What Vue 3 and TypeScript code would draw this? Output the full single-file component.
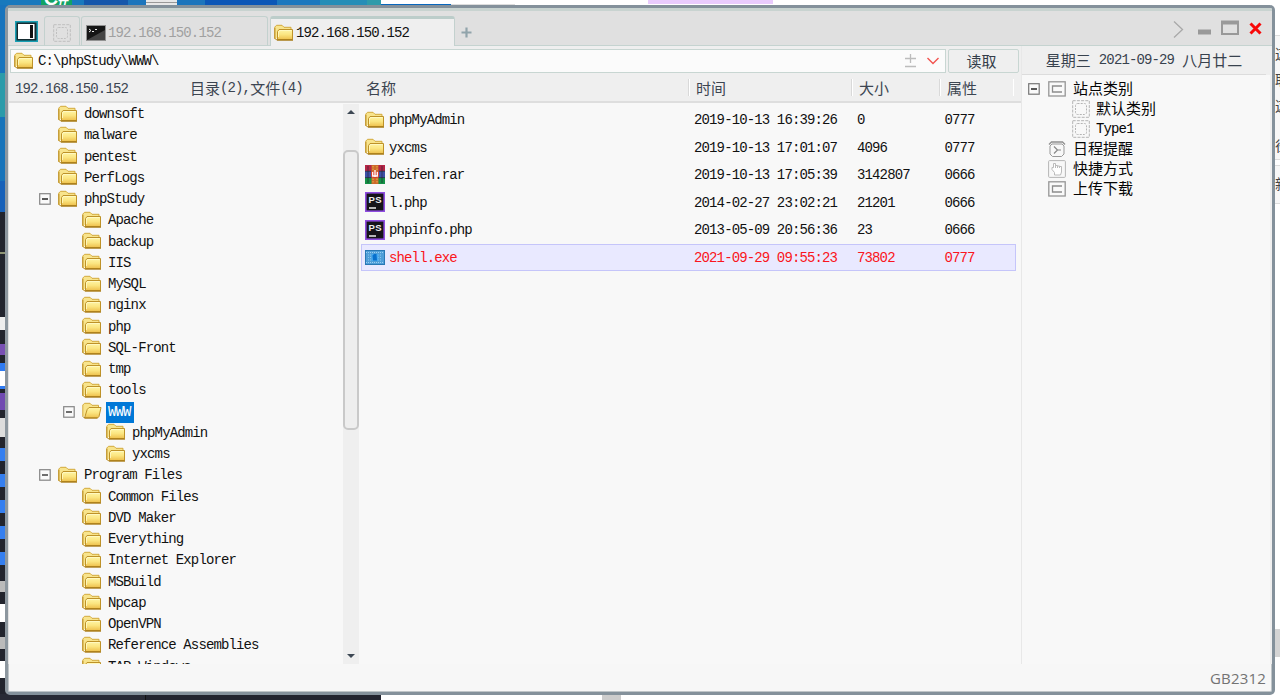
<script setup lang="ts">
interface TreeNode { label: string; level: number; open?: boolean; selected?: boolean }
interface FileRow { name: string; time: string; size: string; attr: string; kind: 'folder' | 'rar' | 'php' | 'exe'; selected?: boolean }

const tree: TreeNode[] = [
  { label: 'downsoft', level: 1 },
  { label: 'malware', level: 1 },
  { label: 'pentest', level: 1 },
  { label: 'PerfLogs', level: 1 },
  { label: 'phpStudy', level: 1, open: true },
  { label: 'Apache', level: 2 },
  { label: 'backup', level: 2 },
  { label: 'IIS', level: 2 },
  { label: 'MySQL', level: 2 },
  { label: 'nginx', level: 2 },
  { label: 'php', level: 2 },
  { label: 'SQL-Front', level: 2 },
  { label: 'tmp', level: 2 },
  { label: 'tools', level: 2 },
  { label: 'WWW', level: 2, open: true, selected: true },
  { label: 'phpMyAdmin', level: 3 },
  { label: 'yxcms', level: 3 },
  { label: 'Program Files', level: 1, open: true },
  { label: 'Common Files', level: 2 },
  { label: 'DVD Maker', level: 2 },
  { label: 'Everything', level: 2 },
  { label: 'Internet Explorer', level: 2 },
  { label: 'MSBuild', level: 2 },
  { label: 'Npcap', level: 2 },
  { label: 'OpenVPN', level: 2 },
  { label: 'Reference Assemblies', level: 2 },
  { label: 'TAP-Windows', level: 2 },
]

const files: FileRow[] = [
  { name: 'phpMyAdmin', time: '2019-10-13 16:39:26', size: '0', attr: '0777', kind: 'folder' },
  { name: 'yxcms', time: '2019-10-13 17:01:07', size: '4096', attr: '0777', kind: 'folder' },
  { name: 'beifen.rar', time: '2019-10-13 17:05:39', size: '3142807', attr: '0666', kind: 'rar' },
  { name: 'l.php', time: '2014-02-27 23:02:21', size: '21201', attr: '0666', kind: 'php' },
  { name: 'phpinfo.php', time: '2013-05-09 20:56:36', size: '23', attr: '0666', kind: 'php' },
  { name: 'shell.exe', time: '2021-09-29 09:55:23', size: '73802', attr: '0777', kind: 'exe', selected: true },
]
</script>

<template>
  <div class="desktop">
    <svg class="defs" width="0" height="0">
      <defs>
        <linearGradient id="gold" x1="0" y1="0" x2="0" y2="1">
          <stop offset="0" stop-color="#fff6a8" /><stop offset="0.5" stop-color="#fbe580" /><stop offset="1" stop-color="#eec04c" />
        </linearGradient>
        <symbol id="folder" viewBox="0 0 20 18">
          <path d="M0.800 15V3L2.500 1.300H8L10 3.300H17V6" fill="#f8e48c" stroke="#d3a93c" />
          <path d="M0.800 4V14.500L3 16" fill="none" stroke="#bd9028" />
          <path d="M3.500 15.500V7.500L5 5.500H18.500V15.500Z" fill="url(#gold)" stroke="#be9228" />
          <path d="M4.500 13V8L5.500 6.500H17.500" fill="none" stroke="#fffac8" stroke-width="0.800" />
          <path d="M3 16H19" stroke="#a97c18" stroke-width="1.400" />
        </symbol>
        <symbol id="folder-open" viewBox="0 0 20 18">
          <path d="M0.800 14.500V3L2.500 1.300H8L10 3.300H16.500V7" fill="#f8e48c" stroke="#d3a93c" />
          <path d="M2.500 16L5.200 7.500L7 5.500H19L17 14.500L15.500 16Z" fill="url(#gold)" stroke="#be9228" />
          <path d="M1 14.500L2.500 16H15.500" fill="none" stroke="#a97c18" />
        </symbol>
        <symbol id="dashed" viewBox="0 0 18 18">
          <rect x="0.700" y="0.700" width="16.600" height="16.600" fill="none" stroke="#b4b4b4" stroke-dasharray="3 1.200" />
          <rect x="3.500" y="3.500" width="11" height="11" rx="2" fill="none" stroke="#b4b4b4" stroke-dasharray="2 1.200" />
        </symbol>
        <symbol id="cbox" viewBox="0 0 18 16">
          <rect x="0.800" y="0.800" width="16.400" height="14.200" fill="#fafafa" stroke="#969696" stroke-width="1.300" />
          <path d="M14 5H4.500V11H14" fill="none" stroke="#8d8d8d" stroke-width="1.300" />
        </symbol>
      </defs>
    </svg>
    <div class="wall-top"><span class="csharp">C#</span><span class="grip"></span><span class="teal"></span><span class="underline"></span><span class="violet"></span></div>
    <div class="wall-left"></div>
    <div class="wall-right"><span>这</span><span>取</span><span>这</span><span class="low">径</span><span class="new">新</span></div>
    <div class="wall-bottom"></div>

    <div class="window">
      <header class="titlebar">
        <svg class="panel-icon" width="23" height="21" viewBox="0 0 23 21"><rect width="23" height="21" fill="#19a0b4" /><rect x="1.500" y="1.500" width="20" height="18" fill="#152b30" /><rect x="3" y="3" width="16.500" height="15" fill="#fff" /><path d="M16.500 4V17" stroke="#111" stroke-width="3" /></svg>
        <div class="tab tab-small"><svg width="18" height="18"><use href="#dashed" /></svg></div>
        <div class="tab tab-term">
          <svg width="20" height="16" viewBox="0 0 20 16"><rect x="0.500" y="0.500" width="19" height="15" fill="#161616" stroke="#929292" /><path d="M1 15L19 5V15Z" fill="#454545" /><path d="M3 4L5 5.500L3 7M6 6.500H8M9 4.500H11" fill="none" stroke="#eee" /></svg>
          <span class="m">192.168.150.152</span>
        </div>
        <div class="tab tab-active"><svg width="20" height="18"><use href="#folder" /></svg><span class="m">192.168.150.152</span></div>
        <svg class="plus" width="11" height="11"><path d="M5.500 0.500V10.500M0.500 5.500H10.500" stroke="#91a4ab" stroke-width="2.200" /></svg>
        <svg class="controls" width="92" height="20" viewBox="0 0 92 20"><path d="M2 1.500L10.500 9.500L2 17.500" fill="none" stroke="#a9a9a9" stroke-width="1.300" /><path d="M26 12H39" stroke="#999" stroke-width="5" /><path d="M49 2.500H67" stroke="#999" stroke-width="4" /><rect x="50" y="2" width="16" height="12" fill="none" stroke="#999" stroke-width="2" /><path d="M78.500 3.500L88.500 13.500M88.500 3.500L78.500 13.500" stroke="#f80808" stroke-width="3" /></svg>
      </header>

      <div class="body">
        <main class="main">
          <div class="path-row">
            <div class="path">
              <svg width="20" height="18"><use href="#folder" /></svg><span class="m">C:\phpStudy\WWW\</span>
              <svg class="path-tools" width="36" height="16" viewBox="0 0 36 16"><path d="M6.500 1V10M1 5.500H12M1 13.500H12" fill="none" stroke="#bcbcbc" stroke-width="1.300" /><path d="M23.500 5L29 10.500L34.500 5" fill="none" stroke="#f25450" stroke-width="1.400" /></svg>
            </div>
            <button class="read z">读取</button>
          </div>
          <div class="heads">
            <span class="m host">192.168.150.152</span>
            <span class="count"><b class="z">目录</b><span class="m">(2),</span><b class="z">文件</b><span class="m">(4)</span></span>
            <span class="z c-name">名称</span><span class="z c-time">时间</span><span class="z c-size">大小</span><span class="z c-attr">属性</span>
          </div>
          <div class="panes">
            <div class="tree">
              <div class="nodes">
                <div v-for="n in tree" :key="n.label + n.level" class="node" :class="'lv' + n.level">
                  <svg class="toggle" width="12" height="12"><g v-if="n.open"><rect x="0.700" y="0.700" width="10.500" height="10.500" fill="#fafafa" stroke="#858585" stroke-width="1.200" /><path d="M3 6H9" stroke="#222" stroke-width="1.300" /></g></svg>
                  <svg class="ficon" width="20" height="18"><use :href="n.selected ? '#folder-open' : '#folder'" /></svg>
                  <span class="m label" :class="{ picked: n.selected }">{{ n.label }}</span>
                </div>
              </div>
              <div class="scroll"><i class="up"></i><div class="thumb"></div><i class="down"></i></div>
            </div>
            <div class="list">
              <div v-for="f in files" :key="f.name" class="file" :class="{ chosen: f.selected }">
                <svg v-if="f.kind === 'folder'" class="kind" width="20" height="18"><use href="#folder" /></svg>
                <svg v-else-if="f.kind === 'rar'" class="kind" width="20" height="19" viewBox="0 0 20 19"><rect width="20" height="6.300" fill="#b52646" /><rect y="6.300" width="20" height="6.300" fill="#3c50a8" /><rect y="12.600" width="20" height="6.400" fill="#159247" /><path d="M0 6.300H20M0 12.600H20" stroke="#263455" /><path d="M3 1V18M17 1V18" stroke="#221f3066" stroke-width="1.500" /><rect x="6.500" width="7" height="19" fill="#cc6a2a" /><path d="M8 1V18M12 1V18" stroke="#e9b54c" stroke-dasharray="1.500 1" /><path d="M6 6.500H14V11L12 13H8L6 11Z" fill="#d93e2e" /><path d="M7.700 7V11H12.300V7M10 5V12" fill="none" stroke="#fff" stroke-width="1.300" /></svg>
                <svg v-else-if="f.kind === 'php'" class="kind" width="20" height="20" viewBox="0 0 20 20"><rect x="0.800" y="0.800" width="18.400" height="18.400" fill="#151419" stroke="#8f4de0" stroke-width="1.600" /><text x="3.500" y="11" class="ps" textLength="13">PS</text><path d="M4 16H11" stroke="#eee" stroke-width="1.700" /></svg>
                <svg v-else class="kind" width="20" height="15" viewBox="0 0 20 15"><rect x="0.500" y="0.500" width="19" height="14" fill="#4f9ed8" stroke="#2878b4" /><path d="M1 2.500H19M1 12.500H19" stroke="#9bd0f2" stroke-dasharray="1 1" /><path d="M3 5H17M3 7.500H17M3 10H17" stroke="#8cc8ef" stroke-dasharray="1 1" /><rect x="6.500" y="4" width="7" height="7" fill="#48aaf0" /><path d="M7.500 5.500L9 4H11.500L12 10.500H8Z" fill="#0870cc" /></svg>
                <span class="m fname">{{ f.name }}</span><span class="m ftime">{{ f.time }}</span><span class="m fsize">{{ f.size }}</span><span class="m">{{ f.attr }}</span>
              </div>
            </div>
          </div>
        </main>

        <aside class="side">
          <div class="date"><span class="z">星期三</span><span class="m">2021-09-29</span><span class="z">八月廿二</span></div>
          <div class="cats">
            <div class="cat"><svg class="toggle" width="12" height="12"><rect x="0.700" y="0.700" width="10.500" height="10.500" fill="#fafafa" stroke="#777" stroke-width="1.200" /><path d="M3 6H9" stroke="#222" stroke-width="1.300" /></svg><svg class="cicon" width="18" height="16"><use href="#cbox" /></svg><span class="z">站点类别</span></div>
            <div class="cat sub"><svg class="cicon" width="18" height="18"><use href="#dashed" /></svg><span class="z">默认类别</span></div>
            <div class="cat sub"><svg class="cicon" width="18" height="18"><use href="#dashed" /></svg><span class="m">Type1</span></div>
            <div class="cat plain"><svg class="cicon" width="18" height="17" viewBox="0 0 18 17"><path d="M1 3.500L3.500 1H14.500L17 3.500" fill="none" stroke="#8f8f8f" stroke-width="1.300" /><path d="M4 3H14L16 5V13L13.500 15.500H4.500L2 13V5Z" fill="none" stroke="#999" /><path d="M6 5.500L9.500 9L6 12.500M9 9H13" fill="none" stroke="#888" stroke-width="1.200" /></svg><span class="z">日程提醒</span></div>
            <div class="cat plain"><svg class="cicon" width="18" height="18" viewBox="0 0 18 18"><rect x="0.600" y="0.600" width="16.800" height="16.800" rx="1" fill="none" stroke="#b6b6b6" /><path d="M6.500 15V12.500L4 9.500V7.500H5.500V3.500H7.500V8V5.500H9.500V8V6H11.500V8V6.500H13.500V12L12.500 15Z" fill="#fff" stroke="#bbb" /></svg><span class="z">快捷方式</span></div>
            <div class="cat plain"><svg class="cicon" width="18" height="16"><use href="#cbox" /></svg><span class="z">上传下载</span></div>
          </div>
        </aside>
      </div>
      <footer class="status">GB2312</footer>
    </div>
  </div>
</template>

<style>
html, body { margin: 0; overflow: hidden; }
</style>
<style scoped>
* { box-sizing: border-box; }
.desktop { position: relative; width: 1280px; height: 700px; overflow: hidden; background: #fff; font-family: "Liberation Mono", "Noto Sans CJK SC", monospace; color: #111; }
.defs { position: absolute; }
svg { display: block; flex: none; }
.m { font: 14px/20px "Liberation Mono", monospace; letter-spacing: -0.87px; white-space: pre; }
.z { font: 15px/20px "Noto Sans CJK SC", sans-serif; white-space: nowrap; }
.ps { font: bold 9.5px "Liberation Sans", sans-serif; fill: #eee; }

.wall-top { position: absolute; left: 0; top: 0; width: 1280px; height: 6px; overflow: hidden; background: linear-gradient(90deg, #1879bd 0 84px, #1457ab 84px 128px, #1b75bc 128px 205px, #0b57b7 205px 277px, #1c78be 277px 320px, #258eb7 320px 367px, #2e9baa 367px 381px, #fff 381px); }
.wall-top span { position: absolute; top: 0; height: 5px; }
.wall-top .csharp { left: 41px; width: 31px; background: #10a364; color: #fff; font: bold 20px/20px "Liberation Sans", sans-serif; height: 20px; top: -12px; text-align: center; }
.wall-top .grip { left: 146px; width: 31px; background: #e8e8e8; box-shadow: inset 0 -2px #e8e8e8, inset 0 -3px #999; }
.wall-top .teal { left: 381px; top: 4px; width: 70px; height: 1px; background: #0867bd; }
.wall-top .underline { left: 451px; top: 4px; width: 64px; height: 1px; background: #ddd; }
.wall-top .violet { left: 648px; width: 125px; height: 4px; background: #e9cbfd; }
.wall-left { position: absolute; left: 0; top: 5px; width: 8px; height: 695px; background: linear-gradient(#1874bd 0 68px, #2c9baa 68px 112px, #1874ba 112px 176px, #1861b9 176px 207px, #22242d 207px 247px, #8e9474 247px 249px, #22242d 249px 312px, #eee 312px 325px, #22242d 325px 339px, #7950b4 339px 350px, #22242d 350px 358px, #2f7bf2 358px 366px, #fff 366px 381px, #2f7bf2 381px 384px, #22242d 384px 388px, #704ab1 388px 405px, #22242d 405px 413px, #ddd 413px 432px, #22242d 432px 443px, #357ff0 443px 456px, #22242d 456px 469px, #357ff0 469px 482px, #22242d 482px 495px, #357ff0 495px 508px, #22242d 508px 521px, #357ff0 521px 534px, #22242d 534px 547px, #357ff0 547px 560px, #22242d 560px 576px, #bbb 576px 587px, #22242d 587px 599px, #fff 599px 617px, #22242d 617px 632px, #bbb 632px 644px, #22242d 644px 656px, #fff 656px 673px, #22242d 673px); }
.wall-right { position: absolute; right: 0; top: 35px; width: 5px; height: 660px; overflow: hidden; background: linear-gradient(#ddd 0 1px, #f7f7f7 1px 124px, #ddd 124px 125px, #fff 125px 130px, #ddd 130px 131px, #f7f7f7 131px 168px, #ddd 168px 169px, #fff 169px 594px, #d4d4d4 594px 622px, #fff 622px); font: 14px/26px "Noto Sans CJK SC", sans-serif; color: #444; padding-top: 5px; }
.wall-right span { display: block; }
.wall-right .low { margin-top: 14px; }
.wall-right .new { margin-top: 12px; }
.wall-bottom { position: absolute; left: 0; top: 694px; width: 1280px; height: 6px; background: linear-gradient(90deg, #282a35 0 145px, #111 145px 146px, #22242f 146px 381px, #fff 381px 602px, #ccc 602px 621px, #fff 621px); }

.window { position: absolute; left: 5px; top: 5px; width: 1270px; height: 690px; border: 3px solid #84919b; border-left-color: #8d979f; border-radius: 5px; background: #f7f7f7; box-shadow: inset 0 0 0 1px #bfc5c8; display: flex; flex-direction: column; overflow: hidden; }
.titlebar { height: 38px; border-top: 3px solid #c8d3d0; border-bottom: 1px solid #c5d3d0; background: #e0e0e0; display: flex; align-items: flex-start; padding-left: 7px; flex: none; }
.panel-icon { margin-top: 10px; }
.tab { height: 30px; margin-top: 5px; border: 1px solid #c3d1ce; border-bottom: 0; border-radius: 3px 3px 0 0; display: flex; align-items: center; color: #a0a0a0; }
.tab-small { width: 36px; margin-left: 6px; padding: 3px 0 0 8px; }
.tab-small svg { opacity: .75; }
.tab-term { width: 187px; margin-left: 1px; padding: 2px 0 0 4px; gap: 2px; }
.tab-active { width: 185px; margin-left: 2px; padding: 1px 0 0 3px; gap: 2px; background: #efefef; border-top: 3px solid #bccdca; color: #111; }
.plus { margin: 16px 0 0 6px; }
.controls { margin: 9px 8px 0 auto; }
.body { display: flex; height: 618px; flex: none; }
.main { width: 1014px; display: flex; flex-direction: column; background: #efefef; border-right: 1px solid #e8e8e8; border-left: 1px solid #e2e2e2; }
.path-row { height: 27px; padding: 3px 0 0 1px; display: flex; gap: 2px; flex: none; }
.path { width: 936px; height: 24px; border: 1px solid #c8d6d2; background: #fbfbfb; display: flex; align-items: center; padding-left: 3px; gap: 4px; }
.path-tools { margin-left: auto; margin-right: 5px; }
.read { width: 71px; height: 24px; border: 1px solid #c8d6d2; border-radius: 2px; background: #efefef; color: #333d49; padding: 0 4px 0 0; line-height: 22px; }
.heads { height: 30px; flex: none; border-bottom: 2px solid #dedede; padding-top: 1px; display: flex; align-items: center; color: #3c4551; }
.heads .z { font-weight: 400; }
.host { width: 175px; padding: 2px 0 0 6px; }
.count { display: flex; align-items: center; width: 176px; padding-left: 6px; }
.count .m { padding-top: 1px; }
.c-name { width: 328px; padding-left: 6px; }
.heads .c-time { width: 163px; }
.heads .c-size { width: 88px; }
.heads .c-attr { width: 75px; border-right: 1px solid #fff; }
.c-time, .c-size, .c-attr { border-left: 1px solid #d9d9d9; padding-left: 7px; box-shadow: inset 1px 0 #fff; height: 17px; line-height: 17px !important; }
.panes { flex: 1; display: flex; min-height: 0; background: #f8f8f8; }
.tree { width: 350px; padding-top: 1px; display: flex; justify-content: space-between; overflow: hidden; }
.nodes { width: 333px; }
.node { height: 21.26px; display: flex; align-items: center; }
.lv1 { padding-left: 30px; }
.lv2 { padding-left: 54px; }
.lv3 { padding-left: 78px; }
.toggle { margin-top: -1px; }
.ficon { margin: -2px 0 0 7px; }
.label { margin-left: 4px; padding: 0 3px 0 2px; height: 21px; }
.picked { color: #fff; background: #0078d7; }
.scroll { width: 16px; background: #efefef; display: flex; flex-direction: column; align-items: center; }
.up, .down { width: 0; height: 0; border: 4px solid transparent; }
.up { border-bottom: 4px solid #3d4854; border-top: 0; margin-top: 6px; }
.down { border-top: 4px solid #3d4854; border-bottom: 0; margin: auto 0 6px; }
.thumb { width: 16px; height: 280px; margin-top: 36px; border: 2px solid #c9c9c9; border-radius: 5px; background: #eee; }
.list { flex: 1; padding: 3px 5px 0 2px; }
.file { height: 27.5px; display: flex; align-items: center; padding-left: 3px; border: 1px solid transparent; }
.file .m { padding-top: 1px; }
.chosen { background: #e9e9ff; border-color: #c5c5fa; color: #fa1520; }
.kind { margin-right: 4px; }
.fname { width: 305px; }
.ftime { width: 163px; }
.fsize { width: 87.500px; }
.side { flex: 1; padding-right: 4px; background: linear-gradient(#efefef 0 29px, #f8f8f8 29px); border-right: 2px solid #efefef; }
.date { height: 29px; border-bottom: 1px solid #dcdcdc; display: flex; justify-content: center; align-items: center; gap: 8px; color: #38424e; }
.cats { padding: 4px 0 0 6px; }
.cat { height: 20px; display: flex; align-items: center; color: #050505; }
.cat .z { margin-top: -2px; }
.cicon { margin-right: 7px; }
.cat .toggle { margin-top: 0; margin-right: 8px; }
.sub { padding-left: 44px; }
.plain { padding-left: 20px; }
.sub .cicon { margin-right: 6px; }
.status { flex: 1; padding: 5px 6px 0 0; text-align: right; color: #737373; font: 15px/18px "Open Sans", sans-serif; letter-spacing: .2px; }
</style>
